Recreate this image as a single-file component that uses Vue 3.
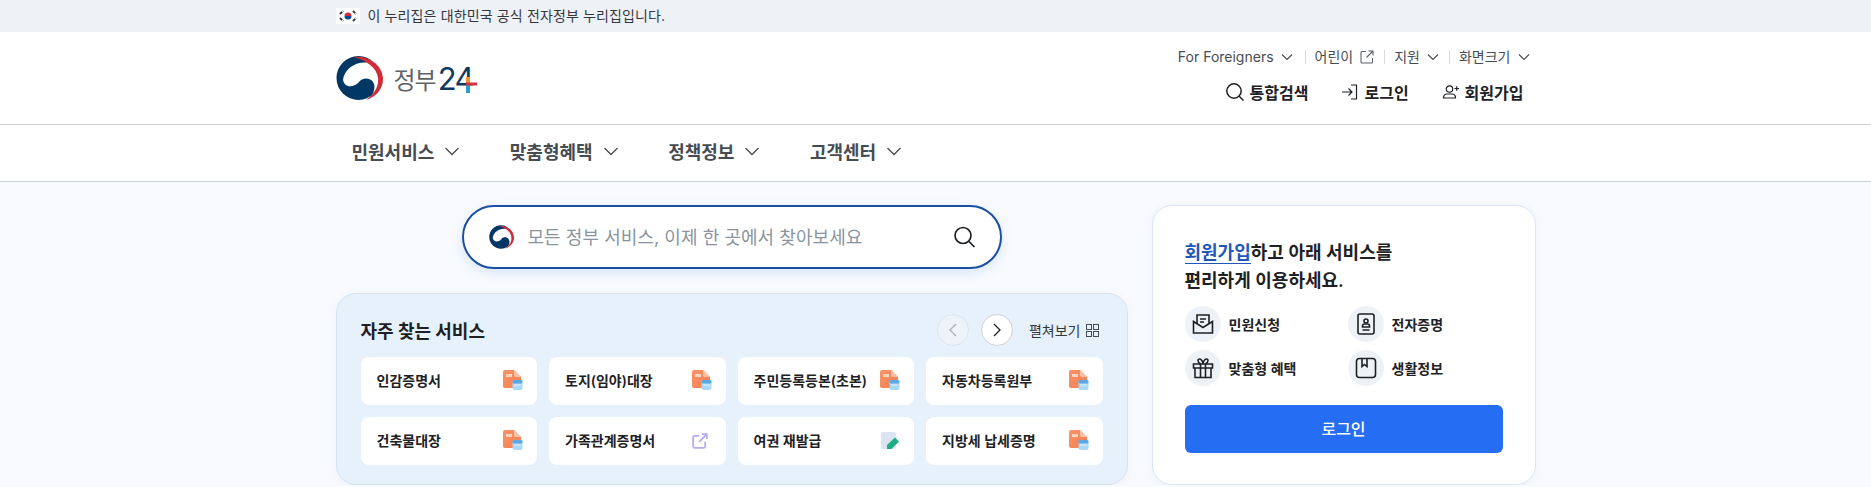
<template>
  <div class="page">
    <svg width="0" height="0" class="defs">
      <symbol id="emblem" viewBox="0 0 47 44">
        <circle cx="22.5" cy="22" r="22" fill="#003764" />
        <path d="M7 24C8 14 18 6 30 6.500L50 -2V50H30C36 41 41 32 37 26C33 21 26 22 23 26C19 31 9 33 7 24Z" fill="#fff" />
        <path d="M18 1C32 -1 47 9 47 23C47 33 40 41 30 44C38 38 43 31 42 22C41 12 31 5 18 1Z" fill="#cd2e3a" />
      </symbol>
      <symbol id="pdf" viewBox="0 0 20 22">
        <linearGradient id="pdf-body" x1="0" y1="0" x2="1" y2="1">
          <stop offset="0" stop-color="#f7946a" />
          <stop offset="1" stop-color="#f47f4f" />
        </linearGradient>
        <path d="M2 0H11L18 7V18H2A2 2 0 0 1 0 16V2A2 2 0 0 1 2 0Z" fill="url(#pdf-body)" />
        <path d="M11 0L18 7H13A2 2 0 0 1 11 5Z" fill="#fbc4a6" />
        <rect x="3" y="4" width="6" height="3" fill="#fcd5bf" />
        <rect x="9.500" y="10" width="10" height="10" rx="2" fill="#a9d9f8" />
        <rect x="9.500" y="10" width="10" height="3.500" rx="1.500" fill="#5aa9e6" />
        <rect x="11" y="14.500" width="7" height="1" fill="#e3f2fd" />
      </symbol>
    </svg>

    <div class="gov-bar">
      <div class="wrap gov-inner">
        <svg class="flag" width="24" height="16" viewBox="0 0 24 16">
          <rect width="24" height="16" fill="#fff" />
          <path d="M8.500 8a3.500 3.500 0 0 1 7 0z" fill="#cd2e3a" />
          <path d="M8.500 8a3.500 3.500 0 0 0 7 0z" fill="#0047a0" />
          <g stroke="#333" stroke-width="2" stroke-dasharray="3 1">
            <path d="M4 6L7 3" />
            <path d="M17 3L20 6" />
            <path d="M4 10L7 13" />
            <path d="M17 13L20 10" />
          </g>
        </svg>
        <span class="gov-text">이 누리집은 대한민국 공식 전자정부 누리집입니다.</span>
      </div>
    </div>

    <header class="header">
      <div class="wrap header-inner">
        <div class="logo">
          <svg width="47" height="44"><use href="#emblem" /></svg>
          <span class="logo-name">정부</span>
          <span class="logo-num">24
            <svg class="logo-plus" width="11" height="16" viewBox="0 0 11 16">
              <rect x="0" y="0" width="4" height="7" fill="#f0933a" />
              <rect x="0" y="7" width="4" height="9" fill="#2b9fd0" />
              <rect x="0" y="5.500" width="11" height="3" fill="#d9323f" />
            </svg>
          </span>
        </div>
        <div class="header-right">
          <div class="util">
            <span class="util-item">For Foreigners
              <svg class="chev-sm" viewBox="0 0 12 8"><path d="M1 1.500L6 6.500L11 1.500" /></svg>
            </span>
            <span class="util-item">어린이
              <svg width="14" height="14" viewBox="0 0 14 14" fill="none" stroke="#58616a" stroke-width="1.100">
                <path d="M6 1.500H2A1 1 0 0 0 1 2.500V12A1 1 0 0 0 2 13H11.500A1 1 0 0 0 12.500 12V8" />
                <path d="M8.500 1H13V5.500M13 1L6.500 7.500" />
              </svg>
            </span>
            <span class="util-item">지원
              <svg class="chev-sm" viewBox="0 0 12 8"><path d="M1 1.500L6 6.500L11 1.500" /></svg>
            </span>
            <span class="util-item">화면크기
              <svg class="chev-sm" viewBox="0 0 12 8"><path d="M1 1.500L6 6.500L11 1.500" /></svg>
            </span>
          </div>
          <div class="member">
            <span class="member-item">
              <svg width="20" height="20" viewBox="0 0 20 20" fill="none" stroke="#1e2124" stroke-width="1.500">
                <circle cx="9" cy="9" r="7.200" />
                <path d="M14.200 14.200L18.500 18.500" />
              </svg>
              통합검색
            </span>
            <span class="member-item">
              <svg width="18" height="18" viewBox="0 0 18 18" fill="none" stroke="#1e2124" stroke-width="1.200">
                <path d="M10 2H15.500V16H10" />
                <path d="M1 9H11M7.500 5.500L11 9L7.500 12.500" />
              </svg>
              로그인
            </span>
            <span class="member-item">
              <svg width="18" height="18" viewBox="0 0 18 18" fill="none" stroke="#1e2124" stroke-width="1.200">
                <circle cx="7.500" cy="6" r="3.200" />
                <path d="M1.500 15V14A3.500 3.500 0 0 1 5 11H10A3.500 3.500 0 0 1 13.500 14V15H1.500Z" />
                <path d="M12.500 5.500H17M14.750 3.250V7.750" />
              </svg>
              회원가입
            </span>
          </div>
        </div>
      </div>
    </header>

    <nav class="nav">
      <div class="wrap nav-inner">
        <a v-for="item in navItems" :key="item" class="nav-item">
          {{ item }}
          <svg width="20" height="20" viewBox="0 0 20 20" fill="none" stroke="#464c53" stroke-width="1.300">
            <path d="M3.500 7L10 13.500L16.500 7" />
          </svg>
        </a>
      </div>
    </nav>

    <main class="wrap main">
      <section class="left">
        <div class="search">
          <svg width="25" height="24"><use href="#emblem" /></svg>
          <span class="placeholder">모든 정부 서비스, 이제 한 곳에서 찾아보세요</span>
          <svg width="24" height="24" viewBox="0 0 24 24" fill="none" stroke="#1e2124" stroke-width="1.700">
            <circle cx="11" cy="10.500" r="8" />
            <path d="M17 16.500L22.500 22" />
          </svg>
        </div>

        <div class="panel">
          <div class="panel-head">
            <h2>자주 찾는 서비스</h2>
            <div class="panel-tools">
              <button class="round off">
                <svg width="12" height="14" viewBox="0 0 12 14" fill="none" stroke="#a9b2bb" stroke-width="1.300"><path d="M9 1L3 7L9 13" /></svg>
              </button>
              <button class="round">
                <svg width="12" height="14" viewBox="0 0 12 14" fill="none" stroke="#1e2124" stroke-width="1.300"><path d="M3 1L9 7L3 13" /></svg>
              </button>
              <span class="expand">펼쳐보기
                <svg width="13" height="13" viewBox="0 0 13 13" fill="none" stroke="#464c53">
                  <rect x=".5" y=".5" width="5" height="5" />
                  <rect x="7.500" y=".5" width="5" height="5" />
                  <rect x=".5" y="7.500" width="5" height="5" />
                  <rect x="7.500" y="7.500" width="5" height="5" />
                </svg>
              </span>
            </div>
          </div>
          <div class="tiles">
            <a v-for="tile in tiles" :key="tile.name" class="tile">
              <span class="tile-name">{{ tile.name }}</span>
              <svg v-if="tile.kind === 'pdf'" width="20" height="22"><use href="#pdf" /></svg>
              <svg v-else-if="tile.kind === 'link'" class="link-icon" width="16" height="16" viewBox="0 0 20 20" fill="none" stroke="#b9a8f2" stroke-width="2.200">
                <path d="M9 3.500H3A1.500 1.500 0 0 0 1.500 5V17A1.500 1.500 0 0 0 3 18.500H15A1.500 1.500 0 0 0 16.500 17V11" />
                <path d="M12.500 1.500H18.500V7.500M18.500 1.500L9 11" />
              </svg>
              <svg v-else width="20" height="20" viewBox="0 0 20 20">
                <rect x="1" y="1" width="15" height="17" rx="2" fill="#dbe4f3" />
                <path d="M7 14L15 6.500L19 10.500L11.500 18H7Z" fill="#1fae82" />
              </svg>
            </a>
          </div>
        </div>
      </section>

      <aside class="card">
        <p class="card-title"><a>회원가입</a>하고 아래 서비스를<br />편리하게 이용하세요.</p>
        <div class="perks">
          <div class="perk">
            <span class="perk-icon">
              <svg width="22" height="22" viewBox="0 0 22 22" fill="none" stroke="#1e2124" stroke-width="1.600">
                <path d="M1.500 8.500V20H20.500V8.500L11 14.500Z" />
                <path d="M5 10.500V2H17V10.500" />
                <path d="M8 6H14M8 9H12" />
              </svg>
            </span>
            민원신청
          </div>
          <div class="perk">
            <span class="perk-icon">
              <svg width="22" height="22" viewBox="0 0 22 22" fill="none" stroke="#1e2124" stroke-width="1.600">
                <rect x="3" y="1" width="16" height="20" rx="2" />
                <circle cx="11" cy="8" r="2" />
                <path d="M7.500 14V13A2 2 0 0 1 9.500 11H12.500A2 2 0 0 1 14.500 13V14ZM7.500 17H14.500" />
              </svg>
            </span>
            전자증명
          </div>
          <div class="perk">
            <span class="perk-icon">
              <svg width="22" height="22" viewBox="0 0 22 22" fill="none" stroke="#1e2124" stroke-width="1.600">
                <path d="M1.500 7H20.500V11H1.500ZM3 11V20.500H19V11M8.500 7V20.500M13.500 7V20.500" />
                <path d="M8.500 7C5 5 5.500 1.500 8 2C9.500 2.300 11 5 11 7C11 5 12.500 2.300 14 2C16.500 1.500 17 5 13.500 7" />
              </svg>
            </span>
            맞춤형 혜택
          </div>
          <div class="perk">
            <span class="perk-icon">
              <svg width="22" height="22" viewBox="0 0 22 22" fill="none" stroke="#1e2124" stroke-width="1.600">
                <rect x="1.500" y="1.500" width="19" height="19" rx="3" />
                <path d="M7 1.500V9.500L9.500 7.500L12 9.500V1.500" />
              </svg>
            </span>
            생활정보
          </div>
        </div>
        <button class="login">로그인</button>
      </aside>
    </main>
  </div>
</template>

<script setup>
const navItems = ['민원서비스', '맞춤형혜택', '정책정보', '고객센터']

const tiles = [
  { name: '인감증명서', kind: 'pdf' },
  { name: '토지(임야)대장', kind: 'pdf' },
  { name: '주민등록등본(초본)', kind: 'pdf' },
  { name: '자동차등록원부', kind: 'pdf' },
  { name: '건축물대장', kind: 'pdf' },
  { name: '가족관계증명서', kind: 'link' },
  { name: '여권 재발급', kind: 'edit' },
  { name: '지방세 납세증명', kind: 'pdf' },
]
</script>

<style scoped>
.page {
  font-family: Inter, "Noto Sans CJK KR", sans-serif;
  color: #1e2124;
}

.defs {
  position: absolute;
}

.wrap {
  width: 1200px;
  margin: 0 auto;
}

.gov-bar {
  height: 32px;
  background: #eef2f7;
  font-size: 14px;
  color: #33363d;
}

.gov-inner {
  display: flex;
  align-items: center;
  gap: 8px;
  height: 32px;
}

.gov-text {
  padding-bottom: 2px;
  letter-spacing: 0.13px;
}

.header {
  height: 92px;
  background: #fff;
  border-bottom: 1px solid #cdd1d5;
}

.header-inner {
  display: flex;
  justify-content: space-between;
  height: 92px;
}

.logo {
  display: flex;
  align-items: center;
}

.logo-name {
  margin-left: 11px;
  font-size: 24px;
  color: #5f6368;
  letter-spacing: -1px;
}

.logo-num {
  position: relative;
  margin-left: 2px;
  font-size: 31px;
  line-height: 1;
  letter-spacing: -1.500px;
  color: #0e3a62;
  font-weight: 400;
}

.logo-plus {
  position: absolute;
  right: -4px;
  top: 14px;
}

.header-right {
  display: flex;
  flex-direction: column;
  align-items: flex-end;
  padding-right: 12px;
}

.util {
  display: flex;
  align-items: center;
  height: 20px;
  margin-top: 15px;
  margin-right: -6px;
  font-size: 14px;
  color: #464c53;
}

.util-item {
  display: flex;
  align-items: center;
  gap: 7px;
  padding: 0 10px 0 9px;
  border-left: 1px solid #d6dade;
  height: 14px;
  line-height: 14px;
}

.util-item:first-child {
  border-left: 0;
  padding-right: 12px;
}

.util-item:last-child {
  padding-right: 0;
}

.chev-sm {
  width: 12px;
  height: 8px;
  fill: none;
  stroke: #464c53;
  stroke-width: 1.100;
}

.member {
  display: flex;
  gap: 33px;
  margin-top: 13px;
  font-size: 16px;
  font-weight: 700;
}

.member-item {
  display: flex;
  align-items: center;
  gap: 5px;
  height: 24px;
}

.nav {
  height: 56px;
  background: #fff;
  border-bottom: 1px solid #cdd1d5;
}

.nav-inner {
  display: flex;
  gap: 15.500px;
  height: 56px;
}

.nav-item {
  display: flex;
  align-items: center;
  gap: 8px;
  padding: 0 16px 4px;
  font-size: 18px;
  font-weight: 700;
  color: #464c53;
}

.main {
  display: flex;
  gap: 24px;
  padding-top: 23px;
}

.left {
  display: flex;
  flex-direction: column;
  align-items: center;
  gap: 24px;
  width: 792px;
}

.search {
  display: flex;
  align-items: center;
  box-sizing: border-box;
  width: 540px;
  height: 64px;
  padding: 0 24px 0 25px;
  background: #fff;
  border: 2px solid #1b4fa3;
  border-radius: 32px;
  box-shadow: 0 4px 12px rgba(37, 110, 244, 0.14);
}

.placeholder {
  flex: 1;
  margin-left: 14px;
  padding-bottom: 2px;
  letter-spacing: 0.05px;
  font-size: 18px;
  color: #8a949e;
}

.panel {
  box-sizing: border-box;
  width: 792px;
  height: 192px;
  padding: 20px 24px;
  background: #e6f1fc;
  border: 1px solid #d8e3f1;
  border-radius: 20px;
  box-shadow: 0 2px 8px rgba(100, 130, 180, 0.08);
}

.panel-head {
  display: flex;
  align-items: center;
  justify-content: space-between;
  height: 32px;
  margin-bottom: 11px;
}

.panel-head h2 {
  margin: 0;
  font-size: 18px;
  font-weight: 700;
}

.panel-tools {
  display: flex;
  align-items: center;
  gap: 12px;
  margin-right: 4px;
}

.round {
  display: flex;
  align-items: center;
  justify-content: center;
  box-sizing: border-box;
  width: 32px;
  height: 32px;
  padding: 0;
  background: #fff;
  border: 1px solid #cdd1d5;
  border-radius: 50%;
}

.round.off {
  background: #eef3f9;
  border-color: #dde4ec;
}

.expand {
  display: flex;
  align-items: center;
  gap: 5px;
  margin-left: 4px;
  font-size: 14px;
  color: #33363d;
}

.tiles {
  display: grid;
  grid-template-columns: repeat(4, 1fr);
  gap: 12px;
}

.tile {
  display: flex;
  align-items: center;
  justify-content: space-between;
  height: 48px;
  padding: 0 14px 0 16px;
  background: #fff;
  border-radius: 8px;
  font-size: 14px;
  font-weight: 600;
}

.tile-name {
  padding-bottom: 2px;
}

.link-icon {
  margin-right: 4px;
}

.card {
  box-sizing: border-box;
  width: 384px;
  height: 280px;
  padding: 33px 32px 32px;
  background: #fff;
  border: 1px solid #dbe5f3;
  border-radius: 20px;
  box-shadow: 0 2px 8px rgba(100, 130, 180, 0.08);
}

.card-title {
  margin: 0;
  font-size: 18px;
  line-height: 28px;
  font-weight: 600;
}

.card-title a {
  color: #1f57b8;
  border-bottom: 1px solid #1f57b8;
}

.perks {
  display: grid;
  grid-template-columns: 163px 1fr;
  gap: 8px 0;
  margin-top: 11px;
}

.perk {
  display: flex;
  align-items: center;
  gap: 8px;
  font-size: 14px;
  font-weight: 600;
}

.perk-icon {
  display: flex;
  align-items: center;
  justify-content: center;
  width: 36px;
  height: 36px;
  background: #eef2f7;
  border-radius: 50%;
}

.login {
  display: block;
  width: 318px;
  height: 48px;
  margin-top: 19px;
  padding-bottom: 4px;
  background: #256ef4;
  border: 0;
  border-radius: 6px;
  font-family: inherit;
  font-size: 16px;
  font-weight: 500;
  color: #fff;
}
</style>

<style>
html,
body {
  overflow: hidden;
  background: #f8fafd;
}
</style>
